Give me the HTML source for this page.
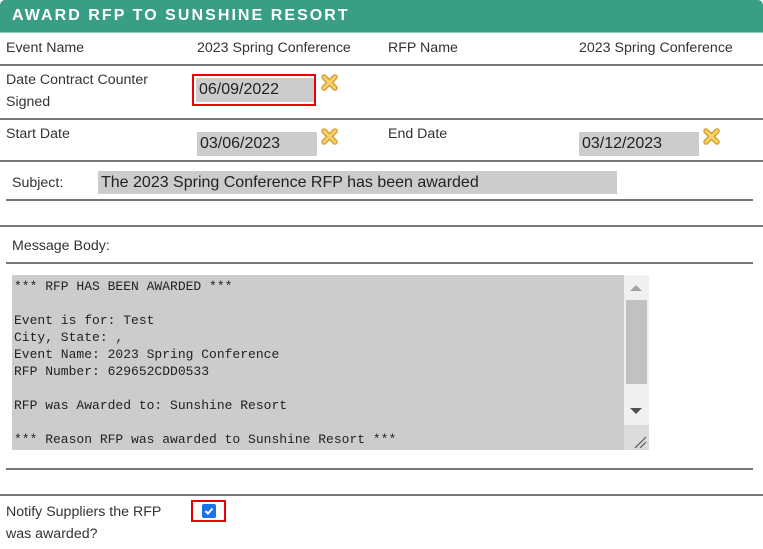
<!DOCTYPE html>
<html><head><meta charset="utf-8"><style>
body{margin:0;width:763px;height:549px;background:#fff;position:relative;overflow:hidden;font-family:"Liberation Sans",Arial,sans-serif;font-size:14.2px;color:#333}
.a{position:absolute;white-space:nowrap}
.hdr{position:absolute;left:0;top:0;width:763px;height:32px;background:#3a9e87;border-radius:5px 5px 0 0;border-bottom:1px solid #8fcdb9}
.hdr span{position:absolute;left:12px;top:7px;color:#fff;font-weight:bold;font-size:16px;letter-spacing:2.05px}
.ln{position:absolute;height:2px;background:#777}
.inp{position:absolute;background:#ccc;font-size:16px;color:#222;padding-left:3px;box-sizing:border-box;line-height:24px}
.x{position:absolute;width:17px;height:17px}
</style></head><body>
<div class="hdr"><span>AWARD RFP TO SUNSHINE RESORT</span></div>
<div class="a" style="left:6px;top:40px">Event Name</div>
<div class="a" style="left:197px;top:40px">2023 Spring Conference</div>
<div class="a" style="left:388px;top:40px">RFP Name</div>
<div class="a" style="left:579px;top:40px">2023 Spring Conference</div>
<div class="ln" style="left:0;top:64px;width:763px"></div>
<div class="a" style="left:6px;top:72px">Date Contract Counter</div>
<div class="a" style="left:6px;top:94px">Signed</div>
<div style="position:absolute;left:192px;top:74px;width:124px;height:32px;border:2px solid #e00;box-sizing:border-box"></div>
<div class="inp" style="left:196px;top:78px;width:118px;height:24px">06/09/2022</div>
<svg class="x" style="left:321px;top:74px" viewBox="0 0 17 17"><path d="M3 3L14 14M14 3L3 14" stroke="#d69a2c" stroke-width="5.5" stroke-linecap="round"/><path d="M3 3L14 14M14 3L3 14" stroke="#f6d36a" stroke-width="3" stroke-linecap="round"/></svg>
<div class="ln" style="left:0;top:118px;width:763px"></div>
<div class="a" style="left:6px;top:126px">Start Date</div>
<div class="inp" style="left:197px;top:132px;width:120px;height:24px">03/06/2023</div>
<svg class="x" style="left:321px;top:128px" viewBox="0 0 17 17"><path d="M3 3L14 14M14 3L3 14" stroke="#d69a2c" stroke-width="5.5" stroke-linecap="round"/><path d="M3 3L14 14M14 3L3 14" stroke="#f6d36a" stroke-width="3" stroke-linecap="round"/></svg>
<div class="a" style="left:388px;top:126px">End Date</div>
<div class="inp" style="left:579px;top:132px;width:120px;height:24px">03/12/2023</div>
<svg class="x" style="left:703px;top:128px" viewBox="0 0 17 17"><path d="M3 3L14 14M14 3L3 14" stroke="#d69a2c" stroke-width="5.5" stroke-linecap="round"/><path d="M3 3L14 14M14 3L3 14" stroke="#f6d36a" stroke-width="3" stroke-linecap="round"/></svg>
<div class="ln" style="left:0;top:160px;width:763px"></div>
<div class="a" style="left:12px;top:175px">Subject:</div>
<div class="inp" style="left:98px;top:171px;width:519px;height:23px;line-height:23px">The 2023 Spring Conference RFP has been awarded</div>
<div class="ln" style="left:6px;top:199px;width:747px"></div>
<div class="ln" style="left:0;top:225px;width:763px"></div>
<div class="a" style="left:12px;top:238px">Message Body:</div>
<div class="ln" style="left:6px;top:262px;width:747px"></div>
<div style="position:absolute;left:12px;top:275px;width:612px;height:175px;background:#ccc"></div>
<pre style="position:absolute;left:14px;top:278px;margin:0;font-family:'Liberation Mono',monospace;font-size:13px;line-height:17px;color:#222">*** RFP HAS BEEN AWARDED ***

Event is for: Test
City, State: ,
Event Name: 2023 Spring Conference
RFP Number: 629652CDD0533

RFP was Awarded to: Sunshine Resort

*** Reason RFP was awarded to Sunshine Resort ***</pre>
<div style="position:absolute;left:624px;top:275px;width:25px;height:175px;background:#f0f0f0"></div>
<div style="position:absolute;left:626px;top:300px;width:21px;height:84px;background:#c1c1c1"></div>
<div style="position:absolute;left:630px;top:285px;width:0;height:0;border-left:6px solid transparent;border-right:6px solid transparent;border-bottom:6px solid #a3a3a3"></div>
<div style="position:absolute;left:630px;top:408px;width:0;height:0;border-left:6px solid transparent;border-right:6px solid transparent;border-top:6px solid #505050"></div>
<div style="position:absolute;left:624px;top:425px;width:25px;height:25px;background:#dcdcdc"></div>
<svg style="position:absolute;left:634px;top:436px" width="14" height="13"><path d="M1 12L12 1M6 12L12 6" stroke="#555" stroke-width="1.2"/></svg>
<div class="ln" style="left:6px;top:468px;width:747px"></div>
<div class="ln" style="left:0;top:494px;width:763px"></div>
<div class="a" style="left:6px;top:504px">Notify Suppliers the RFP</div>
<div class="a" style="left:6px;top:526px">was awarded?</div>
<div style="position:absolute;left:191px;top:500px;width:35px;height:22px;border:2px solid #e00;box-sizing:border-box"></div>
<div style="position:absolute;left:202px;top:504px;width:14px;height:14px;background:#1a73e8;border-radius:2px"></div>
<svg style="position:absolute;left:202px;top:504px" width="14" height="14"><path d="M3.5 7L6 9.5L10.5 4.5" stroke="#fff" stroke-width="2" fill="none"/></svg>
</body></html>
